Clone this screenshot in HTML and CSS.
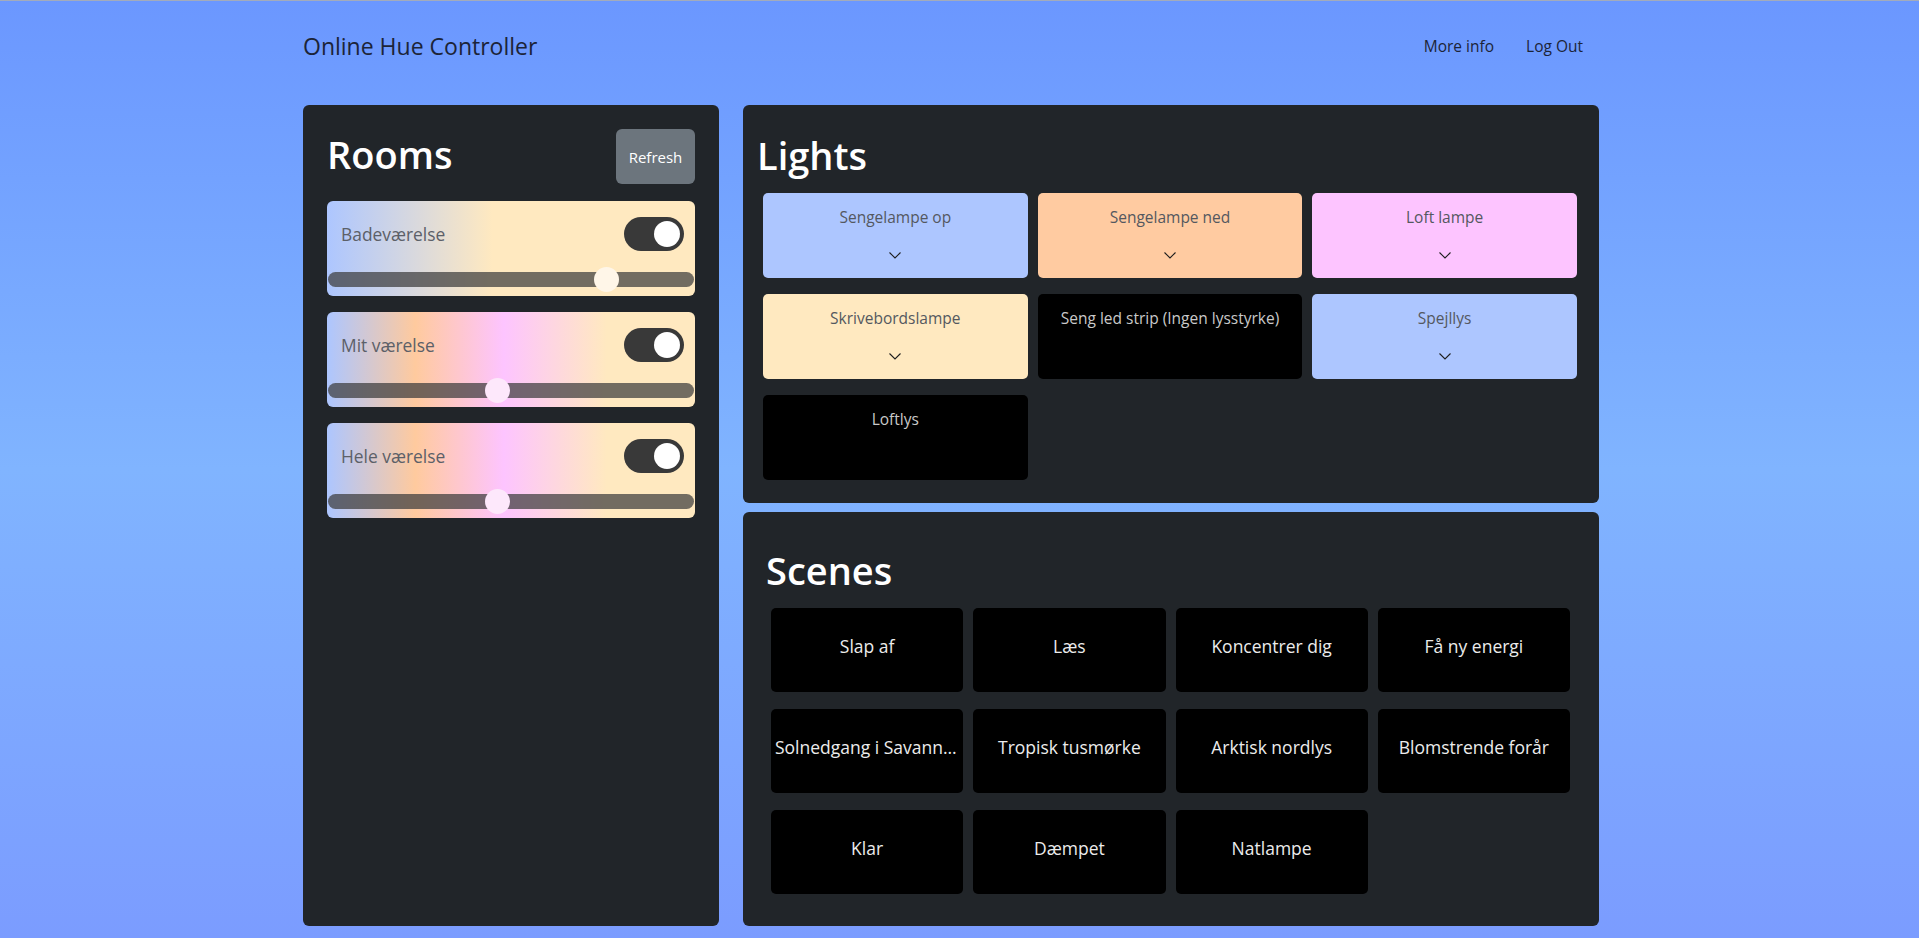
FILE: index.html
```html
<!DOCTYPE html>
<html lang="da">
<head>
<meta charset="utf-8">
<title>Online Hue Controller</title>
<link rel="stylesheet" href="styles.css">
</head>
<body>
<nav class="navbar">
  <div class="container nav-inner">
    <a class="brand" href="#">Online Hue Controller</a>
    <div class="nav-links">
      <a class="nav-link" href="#">More info</a>
      <a class="nav-link" href="#">Log Out</a>
    </div>
  </div>
</nav>
<main class="container layout">
  <section class="panel rooms">
    <div class="rooms-head">
      <h1 class="panel-title rooms-title">Rooms</h1>
      <button class="btn-refresh" type="button">Refresh</button>
    </div>
    <div class="room-list">
      <div class="room-card room-bath">
        <div class="room-row">
          <span class="room-name">Badeværelse</span>
          <span class="switch"><span class="knob"></span></span>
        </div>
        <input class="dimmer thumb-cream" type="range" min="0" max="100" value="78">
      </div>
      <div class="room-card room-mix">
        <div class="room-row">
          <span class="room-name">Mit værelse</span>
          <span class="switch"><span class="knob"></span></span>
        </div>
        <input class="dimmer thumb-pink" type="range" min="0" max="100" value="46">
      </div>
      <div class="room-card room-mix">
        <div class="room-row">
          <span class="room-name">Hele værelse</span>
          <span class="switch"><span class="knob"></span></span>
        </div>
        <input class="dimmer thumb-pink" type="range" min="0" max="100" value="46">
      </div>
    </div>
  </section>
  <div class="right-col">
    <section class="panel lights">
      <h1 class="panel-title lights-title">Lights</h1>
      <div class="light-grid">
        <div class="light-card c-blue"><span class="light-name">Sengelampe op</span><svg class="chev" viewBox="0 0 12 7" width="12" height="7"><polyline points="0.5,0.5 6,6 11.5,0.5"/></svg></div>
        <div class="light-card c-orange"><span class="light-name">Sengelampe ned</span><svg class="chev" viewBox="0 0 12 7" width="12" height="7"><polyline points="0.5,0.5 6,6 11.5,0.5"/></svg></div>
        <div class="light-card c-pink"><span class="light-name">Loft lampe</span><svg class="chev" viewBox="0 0 12 7" width="12" height="7"><polyline points="0.5,0.5 6,6 11.5,0.5"/></svg></div>
        <div class="light-card c-cream"><span class="light-name">Skrivebordslampe</span><svg class="chev" viewBox="0 0 12 7" width="12" height="7"><polyline points="0.5,0.5 6,6 11.5,0.5"/></svg></div>
        <div class="light-card c-off"><span class="light-name">Seng led strip (Ingen lysstyrke)</span></div>
        <div class="light-card c-blue"><span class="light-name">Spejllys</span><svg class="chev" viewBox="0 0 12 7" width="12" height="7"><polyline points="0.5,0.5 6,6 11.5,0.5"/></svg></div>
        <div class="light-card c-off"><span class="light-name">Loftlys</span></div>
      </div>
    </section>
    <section class="panel scenes">
      <h1 class="panel-title scenes-title">Scenes</h1>
      <div class="scene-grid">
        <div class="scene-card">Slap af</div>
        <div class="scene-card">Læs</div>
        <div class="scene-card">Koncentrer dig</div>
        <div class="scene-card">Få ny energi</div>
        <div class="scene-card">Solnedgang i Savannah</div>
        <div class="scene-card">Tropisk tusmørke</div>
        <div class="scene-card">Arktisk nordlys</div>
        <div class="scene-card">Blomstrende forår</div>
        <div class="scene-card">Klar</div>
        <div class="scene-card">Dæmpet</div>
        <div class="scene-card">Natlampe</div>
      </div>
    </section>
  </div>
</main>
</body>
</html>
```
FILE: styles.css
```css
* { box-sizing: border-box; }
html {
  background: linear-gradient(180deg, #6b97ff 0%, #80b4ff 50%, #7b9cff 100%) fixed;
}
body {
  margin: 0;
  border-top: 1px solid #a3abbb;
  font-family: "Open Sans", "Noto Sans", sans-serif;
  color: #212529;
  padding: 0 17px 116px 0;
}
.container {
  width: 1296px;
  margin: 0 auto;
}
.navbar {
  height: 104px;
}
.nav-inner {
  display: flex;
  justify-content: space-between;
  align-items: center;
  height: 90px;
}
.brand {
  font-size: 23px;
  color: #1c2438;
  text-decoration: none;
}
.nav-links {
  display: flex;
}
.nav-link {
  font-size: 15.5px;
  color: #1c2438;
  text-decoration: none;
  padding: 0 16px;
}
.layout {
  display: grid;
  grid-template-columns: 416px 856px;
  column-gap: 24px;
}
.panel {
  background: #212529;
  border-radius: 6px;
}
.panel-title {
  margin: 0;
  font-size: 38px;
  font-weight: 600;
  line-height: 48px;
  color: #fff;
}
.rooms {
  padding: 24px;
}
.rooms-head {
  display: flex;
  justify-content: space-between;
  align-items: flex-start;
  height: 55px;
  margin-bottom: 17px;
}
.rooms-title {
  margin-top: 1px;
}
.btn-refresh {
  width: 79px;
  height: 55px;
  border: 0;
  border-radius: 6px;
  background: #6c757d;
  color: #fff;
  font-family: inherit;
  font-size: 15px;
}
.room-list {
  display: flex;
  flex-direction: column;
  gap: 16px;
}
.room-card {
  height: 95px;
  border-radius: 6px;
  padding: 16px 1px 0 1px;
}
.room-bath {
  background: linear-gradient(90deg, #adc6ff 0%, #ffe9c0 45%, #ffe9c0 100%);
}
.room-mix {
  background: linear-gradient(90deg, #adc6ff 0%, #ffca9e 24%, #fdc4ff 48%, #ffe9c0 76%, #ffe9c0 100%);
}
.room-row {
  display: flex;
  justify-content: space-between;
  align-items: center;
  height: 34px;
  padding: 0 10px 0 13px;
}
.room-name {
  font-size: 17.4px;
  color: #5c6068;
}
.switch {
  width: 60px;
  height: 34px;
  border-radius: 17px;
  background: #393939;
  display: flex;
  justify-content: flex-end;
  align-items: center;
  padding: 0 4px;
}
.knob {
  width: 26px;
  height: 26px;
  border-radius: 50%;
  background: #fff;
}
.dimmer {
  -webkit-appearance: none;
  appearance: none;
  display: block;
  width: 100%;
  height: 25px;
  margin: 16px 0 0 0;
  background: transparent;
}
.dimmer::-webkit-slider-runnable-track {
  height: 15px;
  border-radius: 8px;
  background: rgba(60, 60, 60, 0.72);
}
.dimmer::-webkit-slider-thumb {
  -webkit-appearance: none;
  appearance: none;
  width: 25px;
  height: 25px;
  margin-top: -5px;
  border-radius: 50%;
  border: 0;
}
.thumb-cream::-webkit-slider-thumb { background: #fff6e8; }
.thumb-pink::-webkit-slider-thumb { background: #fde8fb; }

.right-col {
  display: flex;
  flex-direction: column;
  gap: 9px;
}
.lights {
  padding: 26px 22px 23px 20px;
}
.lights-title {
  margin-left: -6px;
  margin-bottom: 14px;
}
.light-grid {
  display: grid;
  grid-template-columns: repeat(3, 1fr);
  column-gap: 10px;
  row-gap: 16px;
}
.light-card {
  height: 85px;
  border-radius: 5px;
  display: flex;
  flex-direction: column;
  align-items: center;
  padding-top: 12px;
}
.light-name {
  font-size: 15.5px;
  line-height: 24px;
  color: #54585f;
}
.chev {
  margin-top: 23px;
  fill: none;
  stroke: #1e1e1e;
  stroke-width: 1.1;
}
.c-blue { background: #adc6ff; }
.c-orange { background: #ffcba1; }
.c-pink { background: #fdc4ff; }
.c-cream { background: #ffe9c0; }
.c-off { background: #000; }
.c-off .light-name { color: #c9c9c9; }

.scenes {
  padding: 34px 29px 32px 28px;
  flex: 1;
}
.scenes-title {
  margin-left: -5px;
  margin-bottom: 14px;
}
.scene-grid {
  display: grid;
  grid-template-columns: repeat(4, 1fr);
  column-gap: 10px;
  row-gap: 17px;
}
.scene-card {
  height: 84px;
  border-radius: 5px;
  background: #000;
  color: #ececec;
  font-size: 17.5px;
  line-height: 27px;
  padding: 25px 4px 0 4px;
  text-align: center;
  white-space: nowrap;
  overflow: hidden;
  text-overflow: ellipsis;
}
```
